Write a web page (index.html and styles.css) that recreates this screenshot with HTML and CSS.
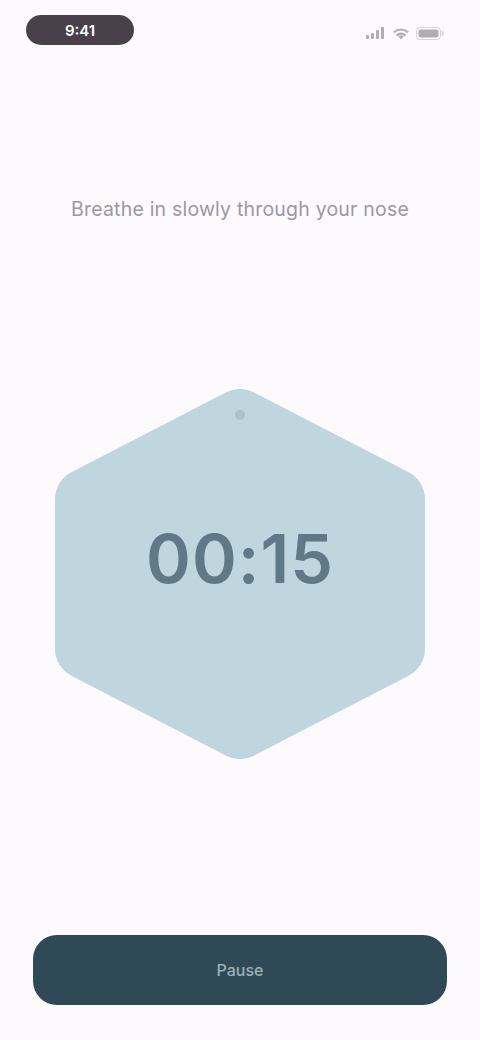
FILE: index.html
```html
<!DOCTYPE html>
<html lang="en">
<head>
<meta charset="utf-8">
<title>Breathe</title>
<link rel="stylesheet" href="styles.css">
</head>
<body>
<div class="screen">
  <header class="status">
    <div class="time-pill">9:41</div>
    <div class="status-icons">
      <svg width="20" height="12" viewBox="0 0 20 12"><rect x="0" y="8" width="3" height="4" rx="1"/><rect x="5" y="6" width="3" height="6" rx="1"/><rect x="10" y="3" width="3" height="9" rx="1"/><rect x="15" y="0" width="3" height="12" rx="1"/></svg>
      <svg width="18" height="13" viewBox="0 0 18 13"><path d="M9 12.5l2.6-3a4 4 0 0 0-5.2 0z"/><path d="M1 4.5a12 12 0 0 1 16 0l-1.6 1.8a9.5 9.5 0 0 0-12.8 0z" opacity=".9"/><path d="M3.8 7.6a7.6 7.6 0 0 1 10.4 0l-1.6 1.8a5.2 5.2 0 0 0-7.2 0z"/></svg>
      <svg width="28" height="13" viewBox="0 0 28 13"><rect x="0.5" y="0.5" width="24" height="12" rx="3.5" fill="none" stroke="currentColor" opacity=".5"/><rect x="2.5" y="2.5" width="20" height="8" rx="2"/><rect x="25.5" y="4" width="2" height="5" rx="1" opacity=".5"/></svg>
    </div>
  </header>

  <p class="prompt">Breathe in slowly through your nose</p>

  <div class="hex-wrap">
    <svg class="hex" viewBox="0 0 400 400" width="400" height="400">
      <polygon points="200,45 355,125 355,275 200,355 45,275 45,125" />
    </svg>
    <div class="hex-content">
      <span class="dot"></span>
      <span class="timer">00:15</span>
    </div>
  </div>

  <button class="action">Pause</button>
</div>
</body>
</html>
```

FILE: styles.css
```css
* { box-sizing: border-box; }
html, body { margin: 0; padding: 0; }
body {
  background: #fdfafd;
  font-family: Inter, "Noto Sans", "Liberation Sans", sans-serif;
  width: 480px;
  height: 1040px;
  overflow: hidden;
}
.screen {
  height: 1040px;
  display: flex;
  flex-direction: column;
  align-items: center;
}
.status {
  width: 100%;
  display: flex;
  justify-content: space-between;
  align-items: center;
  padding: 14px 36px 0 26px;
  height: 46px;
}
.time-pill {
  width: 108px;
  height: 30px;
  border-radius: 15px;
  background: #4a404c;
  color: #fff;
  font-weight: 600;
  font-size: 15px;
  display: flex;
  align-items: center;
  justify-content: center;
}
.status-icons {
  display: flex;
  gap: 6px;
  align-items: center;
  color: #b4abb6;
  fill: #b4abb6;
  padding-top: 6px;
}
.prompt {
  margin: 150px 0 0 0;
  font-size: 19.5px;
  line-height: 26px;
  color: #9c98a3;
  letter-spacing: 0.2px;
}
.hex-wrap {
  margin-top: 152px;
  width: 400px;
  height: 400px;
  position: relative;
  display: flex;
  align-items: center;
  justify-content: center;
}
.hex {
  position: absolute;
  inset: 0;
}
.hex polygon {
  fill: #bfd6de;
  stroke: #bfd6de;
  stroke-width: 60;
  stroke-linejoin: round;
}
.hex-content {
  position: relative;
  width: 100%;
  height: 100%;
  display: flex;
  flex-direction: column;
  align-items: center;
}
.dot {
  margin-top: 36px;
  width: 10px;
  height: 10px;
  border-radius: 50%;
  background: #a9c2cb;
}
.timer {
  margin-top: 98px;
  font-size: 68px;
  font-weight: 600;
  color: #5f7a86;
  letter-spacing: 1px;
  line-height: 80px;
}
.action {
  margin-top: auto;
  margin-bottom: 35px;
  width: 414px;
  height: 70px;
  border: none;
  border-radius: 24px;
  background: #2f4957;
  color: #9db1bb;
  font-family: inherit;
  font-size: 16px;
  font-weight: 500;
}
```
